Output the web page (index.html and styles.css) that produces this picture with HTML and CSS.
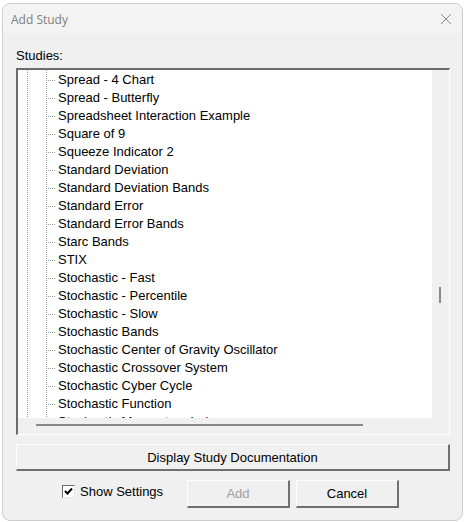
FILE: index.html
```html
<!DOCTYPE html>
<html lang="en">
  <head>
    <meta charset="UTF-8" />
    <title>Add Study</title>
    <link rel="stylesheet" href="styles.css">
  </head>
  <body>
    <div class="dialog">
      <div class="titlebar">
        <span class="title">Add Study</span>
        <svg class="close" width="12" height="12" viewBox="0 0 12 12">
          <path d="M1 1 L11 11 M11 1 L1 11" stroke="#8a8a8a" stroke-width="1" fill="none" />
        </svg>
      </div>

      <div class="content">
        <div class="label">Studies:</div>

        <div class="listbox">
          <div class="tree">
            <ul class="items">
              <li>Spread - 4 Chart</li>
              <li>Spread - Butterfly</li>
              <li>Spreadsheet Interaction Example</li>
              <li>Square of 9</li>
              <li>Squeeze Indicator 2</li>
              <li>Standard Deviation</li>
              <li>Standard Deviation Bands</li>
              <li>Standard Error</li>
              <li>Standard Error Bands</li>
              <li>Starc Bands</li>
              <li>STIX</li>
              <li>Stochastic - Fast</li>
              <li>Stochastic - Percentile</li>
              <li>Stochastic - Slow</li>
              <li>Stochastic Bands</li>
              <li>Stochastic Center of Gravity Oscillator</li>
              <li>Stochastic Crossover System</li>
              <li>Stochastic Cyber Cycle</li>
              <li>Stochastic Function</li>
              <li>Stochastic Momentum Index</li>
            </ul>
          </div>
          <div class="vscroll"><div class="vthumb"></div></div>
          <div class="hscroll"><div class="hthumb"></div></div>
          <div class="corner"></div>
        </div>

        <button class="btn wide">Display Study Documentation</button>

        <div class="footer">
          <label class="check">
            <span class="box">
              <svg width="9" height="9" viewBox="0 0 9 9">
                <path d="M1 4 L3.5 6.5 L8 1.5" stroke="#000" stroke-width="2" fill="none" />
              </svg>
            </span>
            Show Settings
          </label>
          <button class="btn small" disabled>Add</button>
          <button class="btn small">Cancel</button>
        </div>
      </div>
    </div>
  </body>
</html>
```

FILE: styles.css
```css
body {
  margin: 0;
  width: 464px;
  height: 522px;
  overflow: hidden;
  background-color: #ffffff;
  font-family: "Liberation Sans", Arial, sans-serif;
  font-size: 13px;
  color: #000;
}

.dialog {
  margin: 3px 0 0 2px;
  width: 461px;
  height: 518px;
  box-sizing: border-box;
  border: 1px solid #cdcdcd;
  border-radius: 8px;
  background-color: #f0f0f0;
  overflow: hidden;
}

/* title bar */
.titlebar {
  height: 30px;
  display: flex;
  align-items: center;
  justify-content: space-between;
  padding: 0 10px 0 8px;
  background-color: #f3f3f3;
}

.title {
  font-family: "Open Sans", "Noto Sans", sans-serif;
  font-size: 12px;
  color: #808080;
}

.content {
  padding: 14px 0 0 13px;
}

.label {
  height: 16px;
  line-height: 16px;
  margin-bottom: 4px;
}

/* sunken list box with tree */
.listbox {
  width: 434px;
  height: 367px;
  box-sizing: border-box;
  border-style: solid;
  border-width: 2px 1px 1px 2px;
  border-color: #6b6b6b #ffffff #ffffff #6b6b6b;
  display: grid;
  grid-template-columns: 414px 17px;
  grid-template-rows: 348px 16px;
}

.tree {
  background-color: #ffffff;
  overflow: hidden;
  /* dotted guide lines of the parent levels */
  background-image:
    linear-gradient(to bottom, #a0a0a0 50%, transparent 50%),
    linear-gradient(to bottom, #a0a0a0 50%, transparent 50%);
  background-size: 1px 2px, 1px 2px;
  background-position: 9px 0, 28px 0;
  background-repeat: repeat-y;
}

.items {
  list-style: none;
  margin: 0;
  padding: 1px 0 0 40px;
}

.items li {
  height: 18px;
  line-height: 18px;
  white-space: nowrap;
  position: relative;
}

.items li::before {
  content: "";
  position: absolute;
  left: -10px;
  top: 9px;
  width: 8px;
  height: 1px;
  background-image: linear-gradient(to right, #a0a0a0 50%, transparent 50%);
  background-size: 2px 1px;
}

.vscroll {
  background-color: #f0f0f0;
  display: flex;
  flex-direction: column;
  padding-left: 7px;
}

.vthumb {
  margin-top: 217px;
  width: 2px;
  height: 16px;
  background-color: #888;
}

.hscroll {
  background-color: #f0f0f0;
  padding: 6px 0 0 18px;
}

.hthumb {
  width: 327px;
  height: 2px;
  background-color: #888;
}

.corner {
  background-color: #f0f0f0;
}

/* buttons */
.btn {
  font-family: "Liberation Sans", Arial, sans-serif;
  font-size: 13px;
  color: #000;
  background-color: #f0f0f0;
  border-style: solid;
  border-width: 1px 2px 2px 1px;
  border-color: #fdfdfd #6f6f6f #6f6f6f #fdfdfd;
  box-sizing: border-box;
  padding: 0;
}

.btn:disabled {
  color: #a0a0a0;
}

.wide {
  display: block;
  margin-top: 9px;
  width: 434px;
  height: 27px;
}

.footer {
  display: flex;
  align-items: center;
  margin-top: 9px;
  height: 28px;
}

.check {
  display: flex;
  align-items: center;
  gap: 5px;
  margin-left: 46px;
  width: 125px;
  margin-top: -6px;
}

.box {
  width: 13px;
  height: 13px;
  box-sizing: border-box;
  border-style: solid;
  border-width: 1px;
  border-color: #6b6b6b #e6e6e6 #e6e6e6 #6b6b6b;
  background-color: #fff;
  display: flex;
  align-items: center;
  justify-content: center;
}

.small {
  width: 103px;
  height: 28px;
  margin-right: 6px;
}
```
